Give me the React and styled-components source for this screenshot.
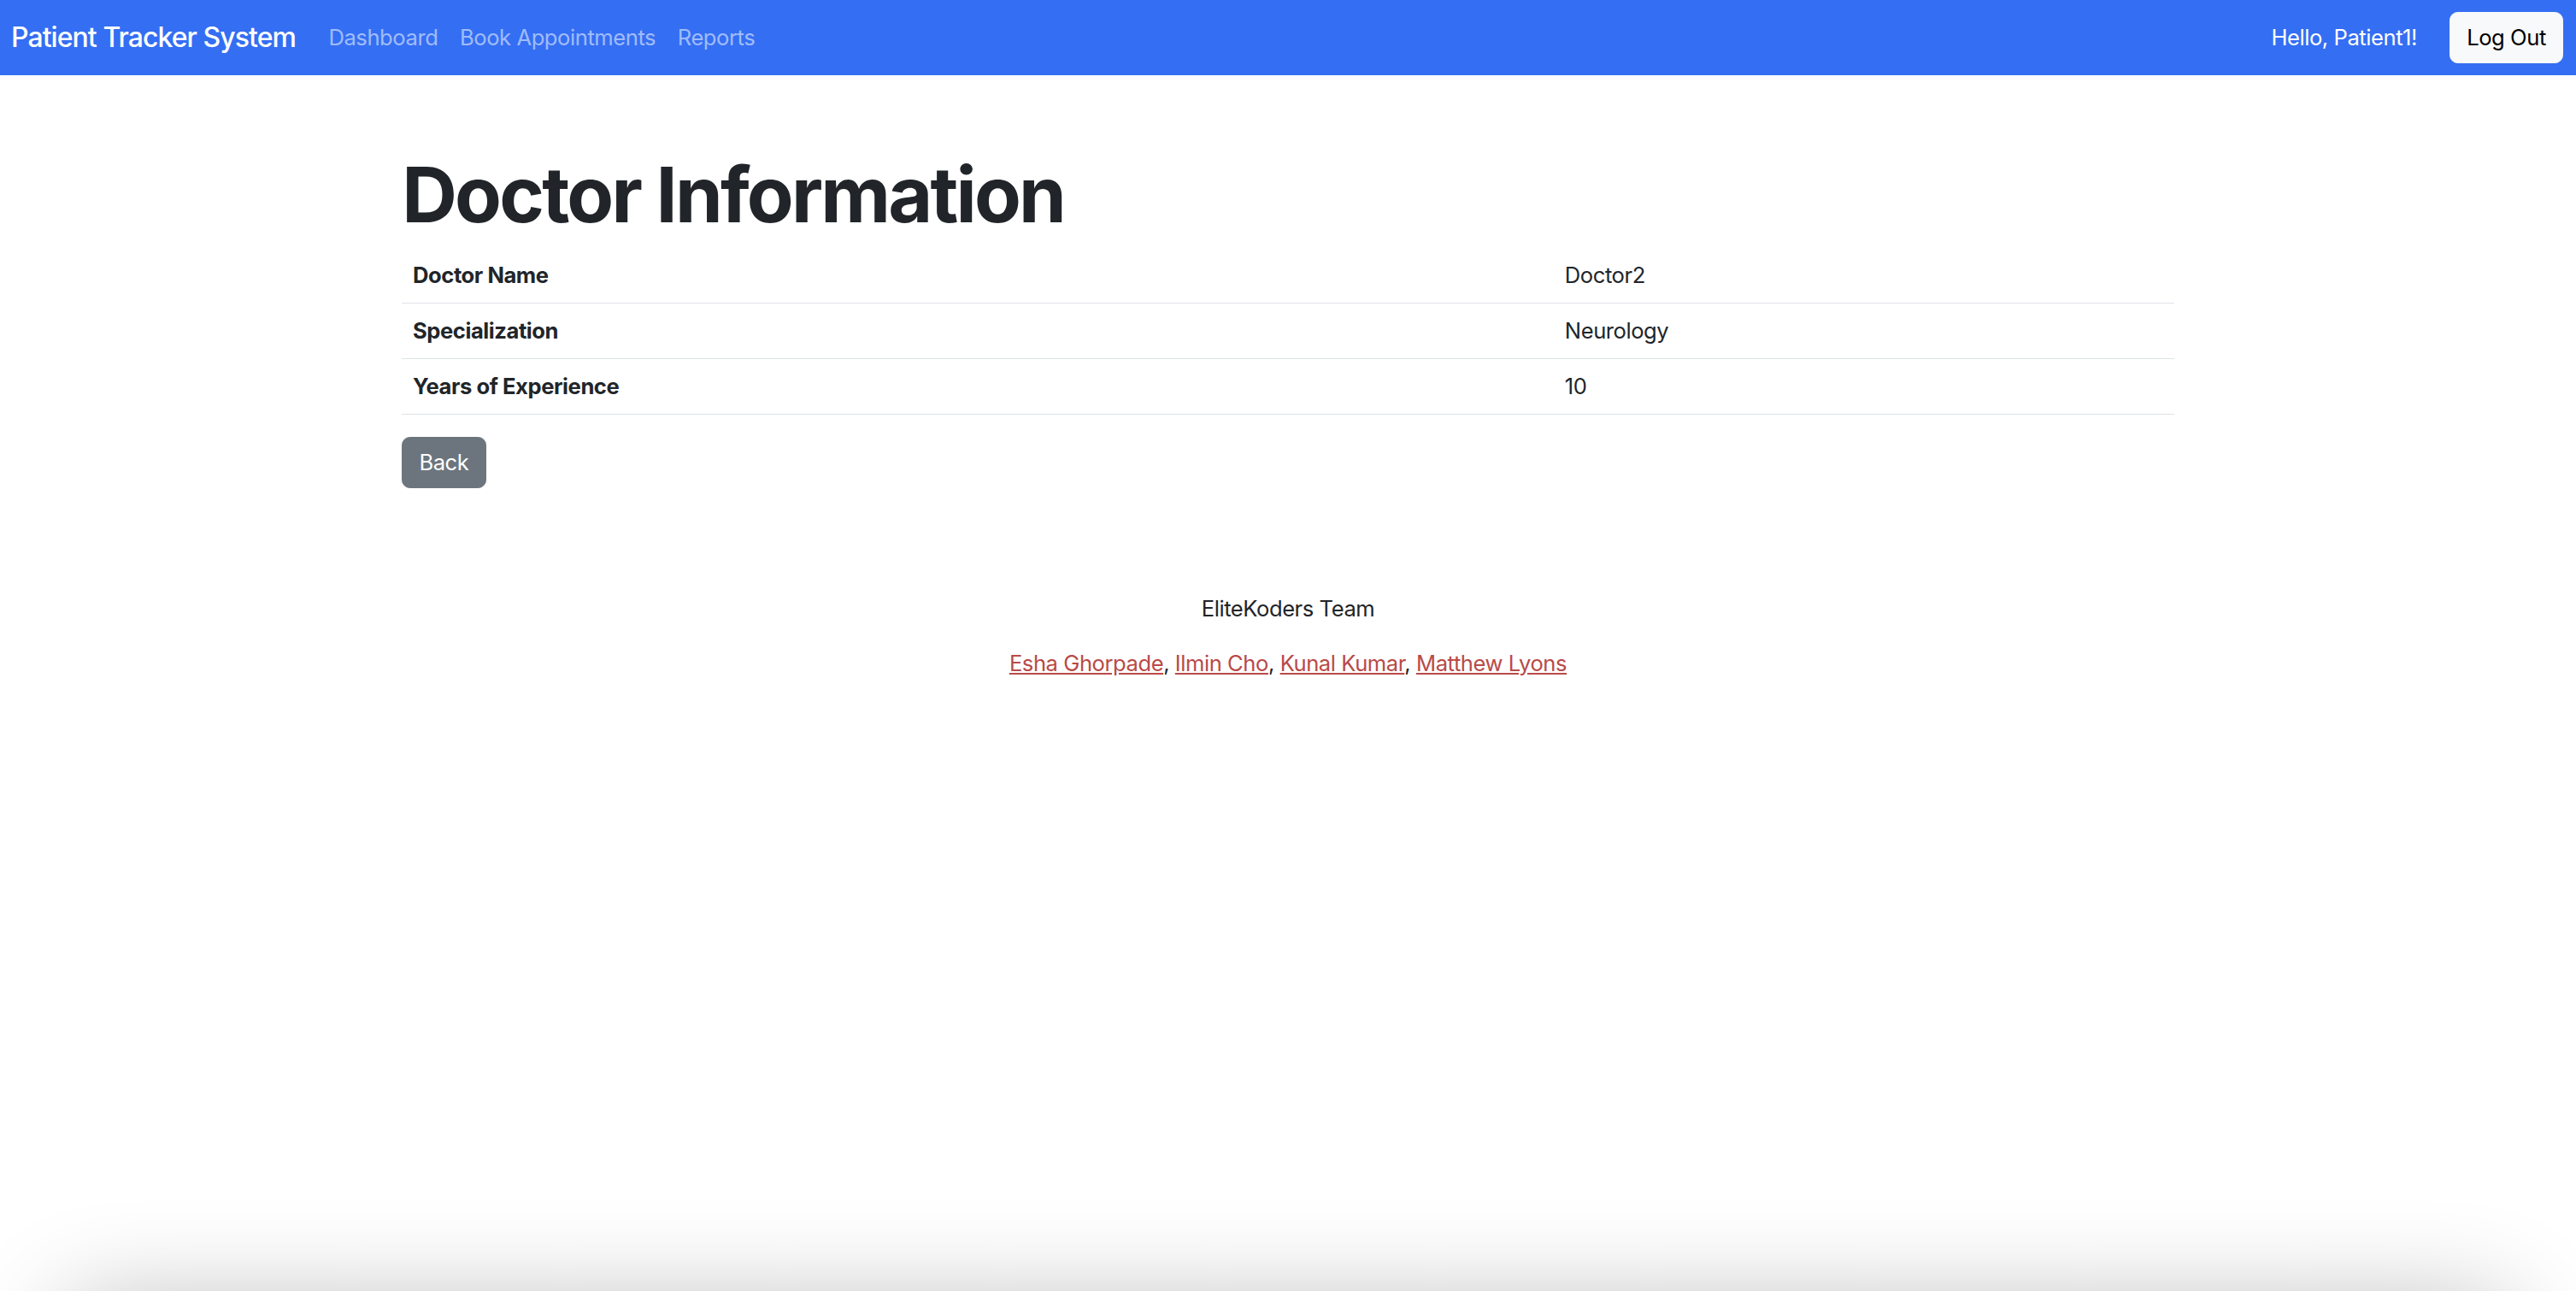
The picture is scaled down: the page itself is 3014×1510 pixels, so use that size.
import React from "react"
import styled, { createGlobalStyle } from "styled-components"

// the page was captured at 1.6x, so every bootstrap size is scaled by it
const u = (n) => `${+(n * 1.6).toFixed(2)}px`

const GlobalStyle = createGlobalStyle`
  html, body {
    margin: 0;
    padding: 0;
    background: #fff;
  }

  body {
    font-family: Inter, "Noto Sans", "Liberation Sans", sans-serif;
    font-size: ${u(16)};
    line-height: 1.5;
    letter-spacing: -0.45px;
    color: #212529;
  }
`

const Navbar = styled.nav`
  display: flex;
  align-items: center;
  height: 88px;
  padding: 0 15px 0 13px;
  background: #346ef3;
`

const Brand = styled.a`
  margin-right: ${u(16)};
  font-size: ${u(20)};
  font-weight: 500;
  line-height: 1.5;
  letter-spacing: -0.95px;
  color: #fff;
  text-decoration: none;
`

const NavLinks = styled.ul`
  display: flex;
  margin: 0;
  padding: 0;
  list-style: none;
  flex: 1;
`

const NavLink = styled.a`
  display: block;
  padding: ${u(8)} ${u(8)};
  color: rgba(255, 255, 255, 0.55);
  text-decoration: none;
`

const Greeting = styled.span`
  margin-right: 38px;
  color: #fff;
`

const Button = styled.button`
  padding: ${u(6)} ${u(12)};
  font-family: inherit;
  font-size: ${u(16)};
  line-height: 1.5;
  letter-spacing: inherit;
  border: ${u(1)} solid ${({ $bg }) => $bg};
  border-radius: ${u(6)};
  background: ${({ $bg }) => $bg};
  color: ${({ $fg }) => $fg};
  cursor: pointer;
`

const Container = styled.main`
  width: ${u(1296)};
  margin: 86px auto 0;
`

const Title = styled.h1`
  margin: 0 0 9px;
  font-size: ${u(56)};
  font-weight: 700;
  line-height: 1.2;
  letter-spacing: -2.8px;
`

const Table = styled.table`
  width: 100%;
  margin-bottom: ${u(16)};
  border-collapse: collapse;

  th,
  td {
    padding: ${u(8)};
    text-align: left;
    border-bottom: ${u(1)} solid #dee2e6;
  }

  th {
    width: 65%;
    font-weight: 700;
  }
`

const Footer = styled.footer`
  margin-top: 122px;
  text-align: center;

  p {
    margin: 0 0 ${u(16)};
  }
`

const MemberLink = styled.a`
  color: #b94a48;
  text-decoration: underline;
`

// shadow cast from a panel parked just below the viewport
const BottomGlow = styled.div`
  position: fixed;
  left: 80px;
  right: 80px;
  top: calc(100vh + 20px);
  height: 100px;
  box-shadow: 0 0 120px rgba(0, 0, 0, 0.3);
  pointer-events: none;
`

const rows = [
  ["Doctor Name", "Doctor2"],
  ["Specialization", "Neurology"],
  ["Years of Experience", "10"],
]

const team = ["Esha Ghorpade", "Ilmin Cho", "Kunal Kumar", "Matthew Lyons"]

export default function App() {
  return (
    <>
      <GlobalStyle />
      <Navbar>
        <Brand href="#">Patient Tracker System</Brand>
        <NavLinks>
          {["Dashboard", "Book Appointments", "Reports"].map((item) => (
            <li key={item}>
              <NavLink href="#">{item}</NavLink>
            </li>
          ))}
        </NavLinks>
        <Greeting>Hello, Patient1!</Greeting>
        <Button $bg="#f8f9fa" $fg="#000">Log Out</Button>
      </Navbar>

      <Container>
        <Title>Doctor Information</Title>
        <Table>
          <tbody>
            {rows.map(([label, value]) => (
              <tr key={label}>
                <th>{label}</th>
                <td>{value}</td>
              </tr>
            ))}
          </tbody>
        </Table>
        <Button $bg="#6c757d" $fg="#fff">Back</Button>

        <Footer>
          <p>EliteKoders Team</p>
          <p>
            {team.map((name, i) => (
              <React.Fragment key={name}>
                {i > 0 && ", "}
                <MemberLink href="#">{name}</MemberLink>
              </React.Fragment>
            ))}
          </p>
        </Footer>
      </Container>

      <BottomGlow />
    </>
  )
}
